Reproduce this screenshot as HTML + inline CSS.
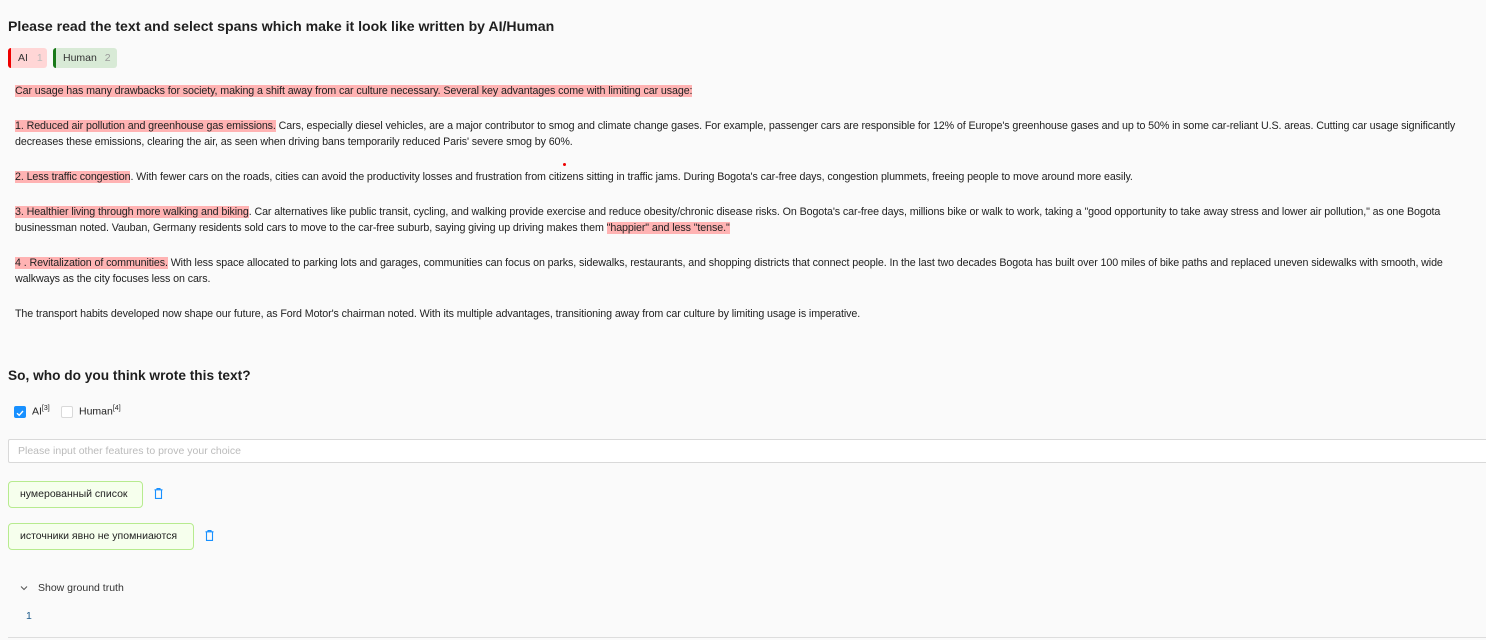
<!DOCTYPE html>
<html><head><meta charset="utf-8"><style>
*{margin:0;padding:0;box-sizing:border-box}
body{width:1486px;height:640px;background:#fafafa;font-family:"Liberation Sans",sans-serif;color:#222;overflow:hidden;position:relative}
.abs{position:absolute;white-space:nowrap}
h1{font-size:14.1px;font-weight:bold;color:#1f1f1f}
.tag{position:absolute;top:48px;height:20px;font-size:10.5px;line-height:20px;border-radius:3px;padding-left:7px;white-space:nowrap;color:#333}
.p{position:absolute;left:15px;font-size:10.7px;line-height:16px;color:#222;white-space:nowrap;letter-spacing:-0.1px}
.h{background:#ffb3b3}
.chip{position:absolute;left:8px;height:27px;border:1px solid #b7eb8f;background:#f6ffed;border-radius:4px;font-size:10.5px;line-height:25px;padding:0 11px;color:#222;white-space:nowrap}
.trash{position:absolute;width:9px;height:11px}
</style></head><body>
<h1 class="abs" style="left:8px;top:18px">Please read the text and select spans which make it look like written by AI/Human</h1>
<div class="tag" style="left:8px;width:39px;background:#ffd6d6;border-left:3px solid #e00">AI <span style="color:#bbb;margin-left:6px">1</span></div>
<div class="tag" style="left:53px;width:64px;background:#d8ead6;border-left:3px solid #1a7a1a">Human <span style="color:#999;margin-left:5px">2</span></div>

<div class="p" style="top:83px"><span class="h">Car usage has many drawbacks for society, making a shift away from car culture necessary. Several key advantages come with limiting car usage:</span></div>
<div class="p" style="top:118px"><span class="h">1. Reduced air pollution and greenhouse gas emissions.</span> Cars, especially diesel vehicles, are a major contributor to smog and climate change gases. For example, passenger cars are responsible for 12% of Europe's greenhouse gases and up to 50% in some car-reliant U.S. areas. Cutting car usage significantly<br>decreases these emissions, clearing the air, as seen when driving bans temporarily reduced Paris' severe smog by 60%.</div>
<div class="abs" style="left:563px;top:163px;width:3px;height:3px;background:#e00;border-radius:50%"></div>
<div class="p" style="top:169px"><span class="h">2. Less traffic congestion</span>. With fewer cars on the roads, cities can avoid the productivity losses and frustration from citizens sitting in traffic jams. During Bogota's car-free days, congestion plummets, freeing people to move around more easily.</div>
<div class="p" style="top:204px"><span class="h">3. Healthier living through more walking and biking</span>. Car alternatives like public transit, cycling, and walking provide exercise and reduce obesity/chronic disease risks. On Bogota's car-free days, millions bike or walk to work, taking a "good opportunity to take away stress and lower air pollution," as one Bogota<br>businessman noted. Vauban, Germany residents sold cars to move to the car-free suburb, saying giving up driving makes them <span class="h">"happier" and less "tense."</span></div>
<div class="p" style="top:255px"><span class="h">4 . Revitalization of communities.</span> With less space allocated to parking lots and garages, communities can focus on parks, sidewalks, restaurants, and shopping districts that connect people. In the last two decades Bogota has built over 100 miles of bike paths and replaced uneven sidewalks with smooth, wide<br>walkways as the city focuses less on cars.</div>
<div class="p" style="top:306px">The transport habits developed now shape our future, as Ford Motor's chairman noted. With its multiple advantages, transitioning away from car culture by limiting usage is imperative.</div>

<h1 class="abs" style="left:8px;top:368px;font-size:13.7px">So, who do you think wrote this text?</h1>
<div class="abs" style="left:14px;top:406px;width:12px;height:12px;background:#1890ff;border-radius:2px"><svg width="12" height="12" viewBox="0 0 12 12"><path d="M3 6.2 L5.2 8.3 L9 4" stroke="#fff" stroke-width="1.4" fill="none"/></svg></div>
<div class="abs" style="left:32px;top:405px;font-size:10.5px">AI<sup style="font-size:7px">[3]</sup></div>
<div class="abs" style="left:61px;top:406px;width:12px;height:12px;border:1px solid #d9d9d9;background:#fff;border-radius:2px"></div>
<div class="abs" style="left:79px;top:405px;font-size:10.5px">Human<sup style="font-size:7px">[4]</sup></div>
<div class="abs" style="left:8px;top:439px;width:1490px;height:24px;border:1px solid #d9d9d9;background:#fff;border-radius:2px;font-size:10.5px;color:#bbb;line-height:22px;padding-left:9px">Please input other features to prove your choice</div>

<div class="chip" style="top:481px;width:135px">нумерованный список</div>
<svg class="trash" style="left:154px;top:488px" viewBox="0 0 9 11"><path d="M0.5 1.8H8.5M3 1.8V0.6H6V1.8M1.5 1.8V10.4H7.5V1.8" stroke="#1890ff" stroke-width="1.1" fill="none"/></svg>
<div class="chip" style="top:523px;width:186px">источники явно не упомниаются</div>
<svg class="trash" style="left:205px;top:530px" viewBox="0 0 9 11"><path d="M0.5 1.8H8.5M3 1.8V0.6H6V1.8M1.5 1.8V10.4H7.5V1.8" stroke="#1890ff" stroke-width="1.1" fill="none"/></svg>

<svg class="abs" style="left:20px;top:585px" width="8" height="6" viewBox="0 0 8 6"><path d="M1 1.5L4 4.5L7 1.5" stroke="#555" stroke-width="1" fill="none"/></svg>
<div class="abs" style="left:38px;top:582px;font-size:10.5px;color:#333">Show ground truth</div>
<div class="abs" style="left:26px;top:610px;font-size:10.5px;color:#1c5a8a">1</div>
<div class="abs" style="left:8px;top:637px;width:1478px;height:1px;background:#ddd"></div>
</body></html>
